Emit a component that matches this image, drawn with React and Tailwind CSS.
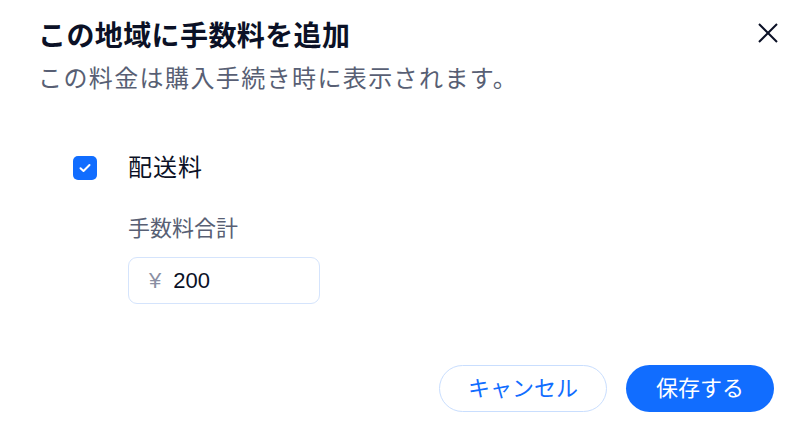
import { useState } from "react";

const font = { fontFamily: '"Liberation Sans", "Noto Sans CJK JP", sans-serif' };

export default function App() {
  const [checked, setChecked] = useState(true);
  const [amount, setAmount] = useState("200");

  return (
    <div
      className="relative h-[440px] w-[804px] overflow-hidden bg-white"
      style={font}
    >
      <button
        type="button"
        aria-label="閉じる"
        className="absolute right-[26px] top-[23px] flex h-[20px] w-[20px] items-center justify-center text-[#0b1126]"
      >
        <svg width="20" height="20" viewBox="0 0 20 20" fill="none">
          <path d="M1 1L19 19M19 1L1 19" stroke="currentColor" strokeWidth="2" />
        </svg>
      </button>

      <header className="px-[38px] pt-[19px]">
        <h2 className="text-[28px] font-bold leading-[36px] tracking-[0.4px] text-[#0b1126]">
          この地域に手数料を追加
        </h2>
        <p className="mt-[8px] text-[24px] leading-[32px] tracking-[1.4px] text-[#585f74]">
          この料金は購入手続き時に表示されます。
        </p>
      </header>

      <section className="mt-[57px] pl-[73px]">
        <label className="flex items-center gap-[31px]">
          <button
            type="button"
            onClick={() => setChecked(!checked)}
            className={
              checked
                ? "flex h-[24px] w-[24px] items-center justify-center rounded-[5px] bg-[#116dff]"
                : "flex h-[24px] w-[24px] items-center justify-center rounded-[5px] border-2 border-[#116dff] bg-white"
            }
          >
            {checked && (
              <svg width="12" height="10" viewBox="0 0 12 10" fill="none">
                <path
                  d="M1.5 5.2L4.5 8L10.5 2"
                  stroke="white"
                  strokeWidth="2"
                  strokeLinecap="round"
                  strokeLinejoin="round"
                />
              </svg>
            )}
          </button>
          <span className="text-[24px] leading-[32px] tracking-[1px] text-[#0b1126]">配送料</span>
        </label>

        <div className="mt-[30px] pl-[55px]">
          <p className="text-[22px] leading-[30px] text-[#585f74]">手数料合計</p>
          <div className="mt-[13px] flex h-[47px] w-[192px] items-center gap-[12px] rounded-[9px] border border-[#d5e4fc] px-[20px]">
            <span className="text-[22px] text-[#8a8fa3]">¥</span>
            <input
              value={amount}
              onChange={(event) => setAmount(event.target.value)}
              className="w-full bg-transparent text-[22px] text-[#0b1126] outline-none"
              style={font}
            />
          </div>
        </div>
      </section>

      <footer className="absolute bottom-[28px] right-[30px] flex gap-[19px]">
        <button
          type="button"
          className="flex h-[47px] w-[168px] items-center justify-center rounded-full border border-[#c9defe] text-[22px] text-[#116dff]"
        >
          キャンセル
        </button>
        <button
          type="button"
          className="flex h-[47px] w-[148px] items-center justify-center rounded-full bg-[#116dff] text-[22px] text-white"
        >
          保存する
        </button>
      </footer>
    </div>
  );
}
